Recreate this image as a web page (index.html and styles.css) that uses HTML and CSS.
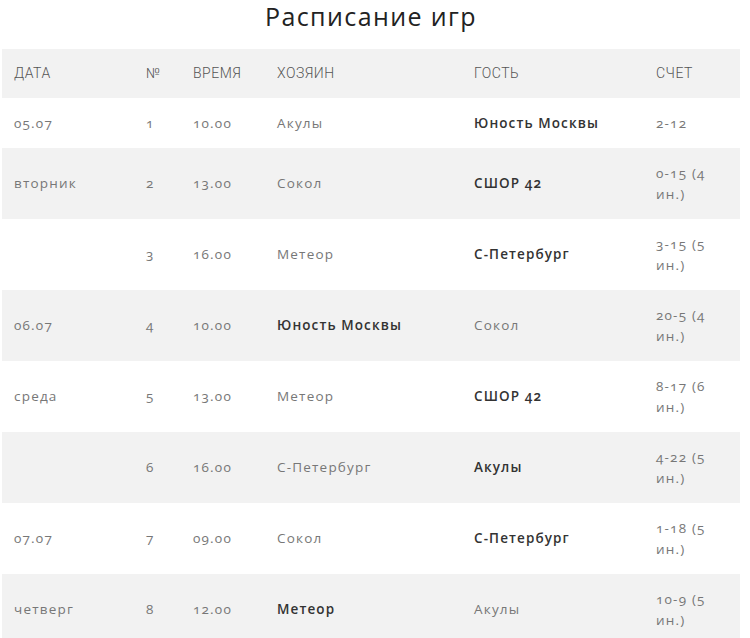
FILE: index.html
```html
<!DOCTYPE html>
<html lang="ru">
<head>
<meta charset="utf-8">
<title>Расписание игр</title>
<link rel="stylesheet" href="styles.css">
</head>
<body>
<div class="page">
  <h1 class="title">Расписание игр</h1>
  <table class="schedule">
    <colgroup>
      <col class="c-date"><col class="c-num"><col class="c-time"><col class="c-host"><col class="c-guest"><col class="c-score">
    </colgroup>
    <thead>
      <tr><th>Дата</th><th>№</th><th>Время</th><th>Хозяин</th><th>Гость</th><th>Счет</th></tr>
    </thead>
    <tbody>
      <tr><td>05.07</td><td>1</td><td>10.00</td><td>Акулы</td><td class="win">Юность Москвы</td><td>2-12</td></tr>
      <tr class="alt"><td>вторник</td><td>2</td><td>13.00</td><td>Сокол</td><td class="win">СШОР 42</td><td>0-15 (4 ин.)</td></tr>
      <tr><td></td><td>3</td><td>16.00</td><td>Метеор</td><td class="win">С-Петербург</td><td>3-15 (5 ин.)</td></tr>
      <tr class="alt"><td>06.07</td><td>4</td><td>10.00</td><td class="win">Юность Москвы</td><td>Сокол</td><td>20-5 (4 ин.)</td></tr>
      <tr><td>среда</td><td>5</td><td>13.00</td><td>Метеор</td><td class="win">СШОР 42</td><td>8-17 (6 ин.)</td></tr>
      <tr class="alt"><td></td><td>6</td><td>16.00</td><td>С-Петербург</td><td class="win">Акулы</td><td>4-22 (5 ин.)</td></tr>
      <tr><td>07.07</td><td>7</td><td>09.00</td><td>Сокол</td><td class="win">С-Петербург</td><td>1-18 (5 ин.)</td></tr>
      <tr class="alt"><td>четверг</td><td>8</td><td>12.00</td><td class="win">Метеор</td><td>Акулы</td><td>10-9 (5 ин.)</td></tr>
    </tbody>
  </table>
</div>
</body>
</html>
```

FILE: styles.css
```css
html, body {
  margin: 0;
  padding: 0;
  background: #ffffff;
}

.page {
  padding: 0 10px 0 2px;
  font-family: "Open Sans", "Noto Sans", sans-serif;
}

.title {
  margin: 0;
  height: 49px;
  box-sizing: border-box;
  padding-top: 0;
  width: 738px;
  text-align: center;
  font-size: 25px;
  line-height: 32px;
  font-weight: 400;
  letter-spacing: 1.4px;
  color: #222222;
}

.schedule {
  width: 738px;
  border-collapse: collapse;
  table-layout: fixed;
  font-size: 13.5px;
  line-height: 21px;
  letter-spacing: 1.2px;
  color: #777777;
  font-variant-numeric: oldstyle-nums;
}

.c-date { width: 132px; }
.c-num { width: 47px; }
.c-time { width: 84px; }
.c-host { width: 197px; }
.c-guest { width: 182px; }
.c-score { width: 96px; }

.schedule th {
  background: #f2f2f2;
  text-align: left;
  font-family: "Roboto", "Liberation Sans", sans-serif;
  font-weight: 300;
  font-size: 14px;
  letter-spacing: 0.5px;
  text-transform: uppercase;
  color: #555555;
  padding: 14px 12px;
}

.schedule td {
  padding: 14.5px 12px;
  vertical-align: middle;
}

.schedule tr.alt td {
  background: #f2f2f2;
}

.schedule td.win {
  font-weight: 600;
  color: #333333;
  letter-spacing: 1.1px;
}
```
